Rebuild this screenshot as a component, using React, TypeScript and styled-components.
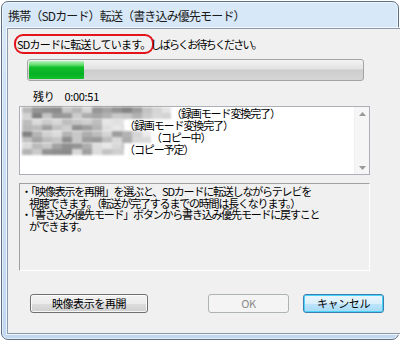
import React from "react";
import styled, { createGlobalStyle } from "styled-components";

const Global = createGlobalStyle`
  html, body { margin: 0; padding: 0; background: #ffffff; }
  body { font-family: "Noto Sans CJK JP", "Noto Sans", sans-serif; }
`;

const FONT = `"Noto Sans CJK JP", "Noto Sans", sans-serif`;

const Window = styled.div`
  box-sizing: border-box;
  width: 398px;
  height: 339px;
  margin: 1px;
  border: 1px solid #5d6f84;
  border-radius: 7px;
  background: linear-gradient(180deg, #d9e9f8 0%, #cfe2f5 25%, #c2d8ef 100%);
  display: grid;
  grid-template-rows: 26px 1fr;
  padding: 0 4px 5px 5px;
  box-shadow: inset 0 0 0 1px rgba(255, 255, 255, 0.55);
`;

const TitleBar = styled.div`
  display: flex;
  align-items: center;
  padding-left: 1px;
  font-family: ${FONT};
  font-size: 12px;
  color: #1a1a1a;
  letter-spacing: -0.85px;
  padding-top: 1px;
`;

const Client = styled.div`
  box-sizing: border-box;
  background: #f0f0f0;
  border: 1px solid #8b9aac;
  box-shadow: 0 0 0 1px rgba(255, 255, 255, 0.7);
  display: flex;
  flex-direction: column;
  font-family: ${FONT};
  font-size: 11px;
  letter-spacing: -1.2px;
  color: #000;
`;

const StatusRow = styled.div`
  display: flex;
  align-items: center;
  padding: 5px 0 0 6px;
  line-height: 16px;
`;

const Oval = styled.span`
  display: inline-flex;
  align-items: center;
  box-sizing: border-box;
  height: 20px;
  border: 2px solid #e3141b;
  border-radius: 9px;
  padding: 0 1px;
  margin-right: -3px;
  letter-spacing: -0.8px;
`;

const StatusRest = styled.span`
  letter-spacing: -1.8px;
`;

const Progress = styled.div`
  box-sizing: border-box;
  margin: 5px 0 0 19px;
  width: 337px;
  height: 22px;
  border: 1px solid #a4a4a4;
  border-radius: 3px;
  padding: 1px;
  background: linear-gradient(180deg, #f3f3f3 0%, #e2e2e2 45%, #cdcdcd 50%, #d6d6d6 100%);
  display: flex;
`;

const ProgressFill = styled.div<{ $pct: number }>`
  width: ${(p) => p.$pct}%;
  height: 100%;
  border-radius: 1px;
  background: linear-gradient(180deg, #b7f0bd 0%, #5fdc6b 22%, #12c02a 35%, #06b025 70%, #12c02a 100%);
`;

const RemainRow = styled.div`
  display: flex;
  height: 16px;
  line-height: 16px;
  margin-top: 7px;
  padding-left: 25px;
  gap: 10px;
  letter-spacing: -0.3px;
`;

const ListBox = styled.div`
  box-sizing: border-box;
  margin: 2px 0 0 11px;
  width: 351px;
  height: 69px;
  background: #ffffff;
  border: 1px solid #acb0b6;
  display: flex;
`;

const ListContent = styled.div`
  flex: 1;
  padding: 0 0 0 2px;
  display: flex;
  flex-direction: column;
`;

const ListRow = styled.div`
  display: flex;
  align-items: center;
  height: 12px;
  line-height: 12px;
  white-space: nowrap;
  letter-spacing: -1.1px;
`;

const Mosaic = styled.svg`
  display: block;
  filter: blur(0.9px);
  flex-shrink: 0;
`;

const ScrollBar = styled.div`
  width: 14px;
  background: #f6f6f6;
  border-left: 1px solid #f0f0f0;
  display: flex;
  flex-direction: column;
  justify-content: space-between;
  align-items: center;
  padding: 5px 0 4px;
`;

const InfoBox = styled.div`
  box-sizing: border-box;
  margin: 8px 0 0 11px;
  width: 351px;
  height: 88px;
  border-style: solid;
  border-width: 1px;
  border-color: #a0a0a0 #ffffff #ffffff #a0a0a0;
  padding: 2px 0 0 1px;
  line-height: 11.7px;
`;

const InfoLine = styled.div<{ $indent?: boolean }>`
  padding-left: ${(p) => (p.$indent ? "8px" : "0")};
  white-space: nowrap;
`;

const ButtonRow = styled.div`
  display: flex;
  margin-top: 23px;
  padding: 0 23px 0 22px;
  gap: 14px;
`;

const Button = styled.button<{ $w: number; $variant?: "default" | "disabled" }>`
  box-sizing: border-box;
  width: ${(p) => p.$w}px;
  height: 19px;
  padding: 0;
  font-family: ${FONT};
  font-size: 11px;
  letter-spacing: -0.4px;
  line-height: 17px;
  border-radius: 3px;
  border: 1px solid
    ${(p) => (p.$variant === "default" ? "#3c7fb1" : p.$variant === "disabled" ? "#adb2b5" : "#707070")};
  color: ${(p) => (p.$variant === "disabled" ? "#8a8a8a" : "#000")};
  background: ${(p) =>
    p.$variant === "default"
      ? "linear-gradient(180deg, #eaf6fd 0%, #d9f0fc 50%, #bee6fd 51%, #a7d9f5 100%)"
      : p.$variant === "disabled"
      ? "#f4f4f4"
      : "linear-gradient(180deg, #f2f2f2 0%, #ebebeb 50%, #dddddd 51%, #cfcfcf 100%)"};
  box-shadow: ${(p) =>
    p.$variant === "default"
      ? "inset 0 0 0 1px #48d3fb"
      : p.$variant === "disabled"
      ? "none"
      : "inset 0 0 0 1px rgba(255,255,255,0.8)"};
`;

const Spacer = styled.div`
  width: 32px;
`;

const Arrow = ({ up }: { up?: boolean }) => (
  <svg width="7" height="4" viewBox="0 0 7 4">
    <path d={up ? "M0 4 L3.5 0 L7 4 Z" : "M0 0 L7 0 L3.5 4 Z"} fill="#9a9a9a" />
  </svg>
);

function grays(seed: number, n: number): string[] {
  const out: string[] = [];
  let s = seed;
  for (let i = 0; i < n; i++) {
    s = (s * 9301 + 49297) % 233280;
    const r = s / 233280;
    const v = Math.round(120 + r * 100);
    out.push(`rgb(${v},${v},${v})`);
  }
  return out;
}

const MosaicRow = ({ width, seed }: { width: number; seed: number }) => {
  const cell = 10;
  const n = Math.ceil(width / cell);
  const cols = grays(seed, n * 2);
  return (
    <Mosaic width={width} height={12} viewBox={`0 0 ${width} 12`}>
      {Array.from({ length: n }).map((_, i) => {
        const fade = i > n - 5 ? 0.35 + (n - i) * 0.1 : 1;
        return (
          <g key={i} opacity={fade}>
            <rect x={i * cell} y={0} width={cell} height={6} fill={cols[i * 2]} />
            <rect x={i * cell} y={6} width={cell} height={6} fill={cols[i * 2 + 1]} />
          </g>
        );
      })}
    </Mosaic>
  );
};

const rows = [
  { w: 149, text: "（録画モード変換完了）", seed: 11 },
  { w: 102, text: "（録画モード変換完了）", seed: 37 },
  { w: 129, text: "（コピー中）", seed: 73 },
  { w: 102, text: "（コピー予定）", seed: 19 },
];

export default function App() {
  return (
    <>
      <Global />
      <Window>
        <TitleBar>携帯（SDカード）転送（書き込み優先モード）</TitleBar>
        <Client>
          <StatusRow>
            <Oval>SDカードに転送しています。</Oval>
            <StatusRest>しばらくお待ちください。</StatusRest>
          </StatusRow>
          <Progress>
            <ProgressFill $pct={16.5} />
          </Progress>
          <RemainRow>
            <span>残り</span>
            <span>0:00:51</span>
          </RemainRow>
          <ListBox>
            <ListContent>
              {rows.map((r, i) => (
                <ListRow key={i}>
                  <MosaicRow width={r.w} seed={r.seed} />
                  <span>{r.text}</span>
                </ListRow>
              ))}
            </ListContent>
            <ScrollBar>
              <Arrow up />
              <Arrow />
            </ScrollBar>
          </ListBox>
          <InfoBox>
            <InfoLine>・「映像表示を再開」を選ぶと、SDカードに転送しながらテレビを</InfoLine>
            <InfoLine $indent>視聴できます。（転送が完了するまでの時間は長くなります。）</InfoLine>
            <InfoLine>・「書き込み優先モード」ボタンから書き込み優先モードに戻すこと</InfoLine>
            <InfoLine $indent>ができます。</InfoLine>
          </InfoBox>
          <ButtonRow>
            <Button $w={118}>映像表示を再開</Button>
            <Spacer />
            <Button $w={81} $variant="disabled">OK</Button>
            <Button $w={81} $variant="default">キャンセル</Button>
          </ButtonRow>
        </Client>
      </Window>
    </>
  );
}
